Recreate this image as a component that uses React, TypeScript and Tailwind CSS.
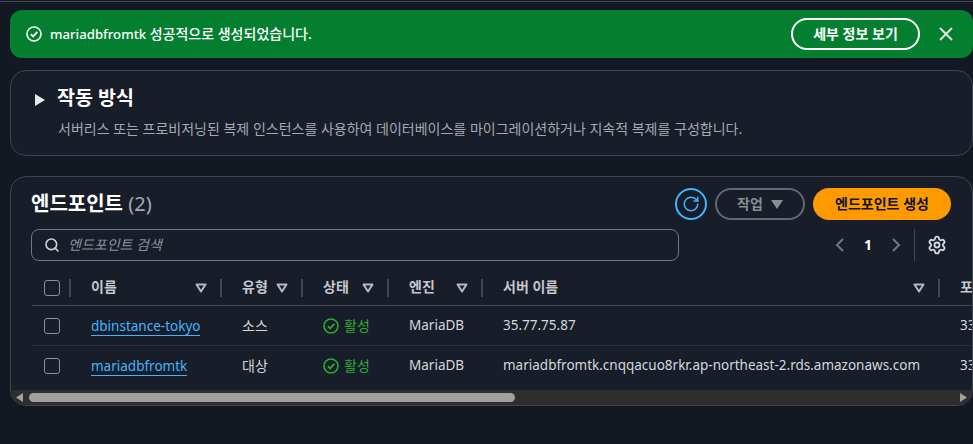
import React from 'react';
import { Search, Settings, RotateCw } from 'lucide-react';

const font = 'font-["Noto_Sans","Noto_Sans_CJK_KR",sans-serif]';

const SortIcon = () => (
    <svg width="12" height="10" viewBox="0 0 12 10" className="shrink-0">
        <path d="M1.5 1.5h9L6 8.5z" fill="none" stroke="#b4b9c1" strokeWidth="2" strokeLinejoin="round" />
    </svg>
);

const CheckCircle = ({ color, size = 16 }: { color: string; size?: number }) => (
    <svg width={size} height={size} viewBox="0 0 16 16" fill="none" stroke={color} strokeWidth="1.6" className="shrink-0">
        <circle cx="8" cy="8" r="7" />
        <path d="M4.8 8.2l2.3 2.3 4.2-4.6" strokeWidth="1.8" />
    </svg>
);

const Checkbox = () => <div className="w-4 h-4 rounded-[3px] border border-[#8c9199]" />;

const HeaderCell = ({ label, className }: { label: string; className: string }) => (
    <div className={`flex items-center justify-between h-[18px] border-r-2 border-[#424750] pl-5 pr-[13px] ${className}`}>
        <span className="text-sm font-semibold text-[#c6c6cd] whitespace-nowrap -mt-[2px]">{label}</span>
        <SortIcon />
    </div>
);

const rows = [
    { name: 'dbinstance-tokyo', role: '소스', server: '35.77.75.87', h: 'h-10' },
    { name: 'mariadbfromtk', role: '대상', server: 'mariadbfromtk.cnqqacuo8rkr.ap-northeast-2.rds.amazonaws.com', h: 'h-[44px] pb-1' },
];

export default function App() {
    return (
        <div className={`${font} w-[973px] h-[444px] overflow-hidden bg-[#131923] text-sm text-[#d5d7da]`}>
            <div className="h-[2px] border-b border-[#454a54] mb-2" />

            {/* Flash */}
            <div className="ml-2.5 h-12 rounded-xl bg-[#037f2f] flex items-center pl-[16px] pr-[20px] text-white">
                <CheckCircle color="#ffffff" />
                <span className="ml-2 text-sm font-medium"><span className="text-[13.2px]">mariadbfromtk</span> 성공적으로 생성되었습니다.</span>
                <button className="ml-auto w-[129px] h-[32px] rounded-full border-2 border-white text-sm font-bold text-white">세부 정보 보기</button>
                <svg width="14" height="14" viewBox="0 0 14 14" className="ml-[19px]">
                    <path d="M1 1l12 12M13 1L1 13" stroke="#e2e4e6" strokeWidth="2" fill="none" />
                </svg>
            </div>

            {/* How it works */}
            <div className="ml-2.5 mt-3 h-[86px] rounded-2xl border border-[#3f444e] bg-[#171d29] pl-6 pt-[14px]">
                <div className="flex items-center">
                    <svg width="10" height="12" viewBox="0 0 10 12" className="mt-[4px]"><path d="M0 0l10 6-10 6z" fill="#e8e9ea" /></svg>
                    <span className="ml-[12px] text-[19.5px] leading-[26px] font-bold text-white">작동 방식</span>
                </div>
                <p className="ml-[23px] mt-[8px] text-sm leading-5 text-[#a5a9b0] whitespace-nowrap">서버리스 또는 프로비저닝된 복제 인스턴스를 사용하여 데이터베이스를 마이그레이션하거나 지속적 복제를 구성합니다.</p>
            </div>

            {/* Endpoints */}
            <div className="ml-2.5 mt-[20px] h-[230px] rounded-2xl border border-[#3f444e] bg-[#171d29] overflow-hidden flex flex-col">
                <div className="flex items-center h-[53px] pl-[20px] pr-[21px] pt-[2px]">
                    <h2 className="text-xl font-bold text-white">엔드포인트 <span className="font-normal text-[#a5a9b0]">(2)</span></h2>
                    <div className="ml-auto flex items-center">
                        <button className="w-8 h-8 rounded-full border-2 border-[#42b4ff] flex items-center justify-center">
                            <RotateCw className="w-[18px] h-[18px] text-[#42b4ff]" strokeWidth={2} />
                        </button>
                        <button className="ml-2 w-[90px] h-8 rounded-full border-2 border-[#656871] flex items-center justify-center gap-2 text-sm font-semibold text-[#8a8d94]">
                            작업
                            <svg width="12" height="9" viewBox="0 0 12 9"><path d="M0 0h12L6 9z" fill="#8a8d94" /></svg>
                        </button>
                        <button className="ml-2 w-[138px] h-8 rounded-full bg-[#ff9900] text-sm font-bold text-[#0f141a]">엔드포인트 생성</button>
                    </div>
                </div>

                <div className="flex items-center h-8 pl-[20px] pr-[25px]">
                    <div className="w-[648px] h-8 rounded-lg border border-[#72767e] flex items-center pl-[12px]">
                        <Search className="w-4 h-4 text-[#d0d2d5]" strokeWidth={2.4} />
                        <span className="ml-2 text-sm italic text-[#8d9199]">엔드포인트 검색</span>
                    </div>
                    <div className="ml-auto flex items-center h-8">
                        <svg width="9" height="14" viewBox="0 0 9 14" fill="none" stroke="#72767e" strokeWidth="2"><path d="M8 1L2 7l6 6" /></svg>
                        <span className="mx-[17px] w-[14px] text-center text-sm font-bold text-white">1</span>
                        <svg width="9" height="14" viewBox="0 0 9 14" fill="none" stroke="#72767e" strokeWidth="2"><path d="M1 1l6 6-6 6" /></svg>
                        <div className="ml-[13px] h-8 border-l border-[#424750]" />
                        <Settings className="ml-[12px] w-5 h-5 text-[#d5d7da]" strokeWidth={2.2} />
                    </div>
                </div>

                {/* Table */}
                <div className="mt-[10px] ml-[21px] w-[1000px]">
                    <div className="flex items-center h-[35px] border-b border-[#424750]">
                        <div className="w-[39px] h-[18px] border-r-2 border-[#424750] pl-3 flex items-center shrink-0"><Checkbox /></div>
                        <HeaderCell label="이름" className="w-[151px]" />
                        <HeaderCell label="유형" className="w-[81px]" />
                        <HeaderCell label="상태" className="w-[86px]" />
                        <HeaderCell label="엔진" className="w-[94px]" />
                        <HeaderCell label="서버 이름" className="w-[457px]" />
                        <span className="ml-5 text-sm font-semibold text-[#c6c6cd] -mt-[2px]">포트</span>
                    </div>
                    {rows.map((r, i) => (
                        <div key={r.name} className={`flex items-center ${r.h} ${i === 0 ? 'border-b border-[#2a303a]' : ''}`}>
                            <div className="w-[39px] pl-3 shrink-0"><Checkbox /></div>
                            <div className="w-[151px] pl-5 shrink-0">
                                <a className="text-[#42b4ff] border-b border-[#42b4ff] text-[13.5px] leading-[17px] inline-block">{r.name}</a>
                            </div>
                            <div className="w-[81px] pl-5 shrink-0">{r.role}</div>
                            <div className="w-[86px] pl-5 shrink-0 flex items-center gap-[5px] text-[#29ad32]">
                                <CheckCircle color="#29ad32" />활성
                            </div>
                            <div className="w-[94px] pl-5 shrink-0 text-[13.5px]">MariaDB</div>
                            <div className="w-[457px] pl-5 shrink-0 whitespace-nowrap text-[13.5px]">{r.server}</div>
                            <div className="pl-5 text-[13.5px]">3306</div>
                        </div>
                    ))}
                </div>

                {/* Horizontal scrollbar */}
                <div className="mt-auto h-[15px] bg-[#2e2e2e] flex items-center pl-[5px] pr-[5px] shrink-0">
                    <svg width="7" height="9" viewBox="0 0 7 9"><path d="M7 0v9L0 4.500z" fill="#a0a0a0" /></svg>
                    <div className="ml-[6px] w-[486px] h-[9px] rounded-full bg-[#a0a0a0]" />
                    <svg width="7" height="9" viewBox="0 0 7 9" className="ml-auto"><path d="M0 0v9l7-4.500z" fill="#a0a0a0" /></svg>
                </div>
            </div>
        </div>
    );
}
